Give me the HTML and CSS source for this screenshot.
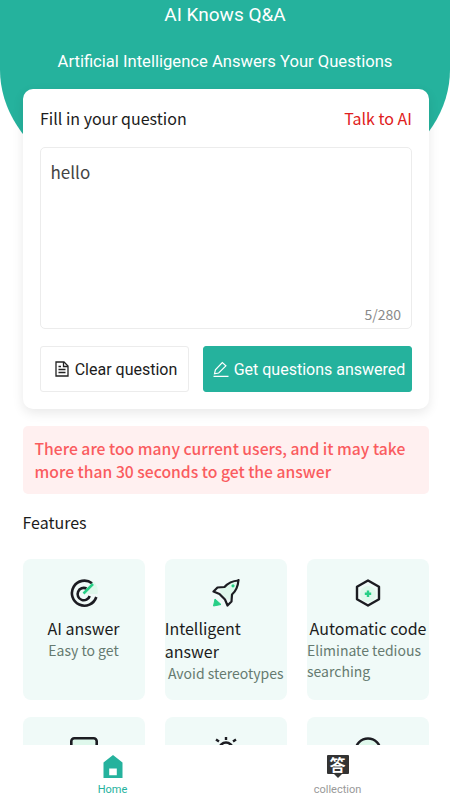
FILE: index.html
```html
<!DOCTYPE html>
<html lang="en">
<head>
<meta charset="utf-8">
<title>AI Knows Q&amp;A</title>
<link rel="stylesheet" href="styles.css">
</head>
<body>
<div class="app">
  <main class="main">
    <header class="hero">
      <h1 class="hero-title">AI Knows Q&amp;A</h1>
      <p class="hero-sub">Artificial Intelligence Answers Your Questions</p>
    </header>
    <section class="ask-card">
      <div class="ask-head">
        <span class="ask-label">Fill in your question</span>
        <span class="ask-talk">Talk to AI</span>
      </div>
      <div class="input-box">
        <div class="input-text">hello</div>
        <div class="input-count">5/280</div>
      </div>
      <div class="actions">
        <button class="btn btn-clear">
          <svg class="btn-icon" viewBox="0 0 16 16" fill="none" stroke="#222" stroke-width="1.300"><path d="M2 1h8l4 4v10H2z"/><path d="M9.500 1v4.500H14M4.500 5.500h2.500M4.500 8.500h7M4.500 11.500h7"/></svg>
          Clear question
        </button>
        <button class="btn btn-get">
          <svg class="btn-icon" viewBox="0 0 16 16" fill="none" stroke="#fff" stroke-width="1.200"><path d="M.5 15.300h15M1.500 12.800l.9-3.900 6.900-7.400 3.600 3.300-7.200 7.200z"/></svg>
          Get questions answered
        </button>
      </div>
    </section>
    <div class="notice">There are too many current users, and it may take more than 30 seconds to get the answer</div>
    <h2 class="features-title">Features</h2>
    <div class="feature-grid">
      <div class="feature">
        <svg class="feature-icon" viewBox="0 0 28 28" fill="none">
          <path d="M13 15 24 3a13 13 0 0 1 3.500 12z" fill="#dff8ec"/>
          <path d="M22 4.200A12.500 12.500 0 1 0 26.300 18" stroke="#1c1c22" stroke-width="2.600"/>
          <path d="M16.500 9.500a6.200 6.200 0 1 0 3.200 7.500" stroke="#1c1c22" stroke-width="2.600"/>
          <path d="M13.500 14.500 23 5" stroke="#27cf86" stroke-width="2.500"/>
        </svg>
        <div class="feature-name center">AI answer</div>
        <div class="feature-desc center">Easy to get</div>
      </div>
      <div class="feature">
        <svg class="feature-icon" viewBox="0 0 28 28" fill="none">
          <path d="M9 18 8 11 14 5 25 3 24 14 18 21z" fill="#dff8ec"/>
          <path d="M26.500 1.500c-6 .4-10.500 2.500-14 6.500L5.500 8.500 1.500 12.500l6 2.500 5.500 5.500 2.500 6 4-4 .5-7c4-3.500 6-8 6.500-14.500z" stroke="#1c1c22" stroke-width="2.200" stroke-linejoin="round"/>
          <circle cx="21" cy="6.800" r="1.600" fill="#27cf86"/>
          <path d="M3 20l6 5.500-7.500 1.500z" fill="#27cf86" stroke="#27cf86" stroke-linejoin="round"/>
        </svg>
        <div class="feature-name">Intelligent answer</div>
        <div class="feature-desc center">Avoid stereotypes</div>
      </div>
      <div class="feature">
        <svg class="feature-icon" viewBox="0 0 28 28" fill="none">
          <circle cx="14" cy="15" r="8" fill="#dff8ec"/>
          <path d="M14 1.500 25 7.800v12.400L14 26.500 3 20.200V7.800z" stroke="#1c1c22" stroke-width="2.400" stroke-linejoin="round"/>
          <path d="M14 11.500v6.500M10.800 14.800h6.400" stroke="#27cf86" stroke-width="2.400"/>
        </svg>
        <div class="feature-name center nowrap">Automatic code</div>
        <div class="feature-desc">Eliminate tedious searching</div>
      </div>
      <div class="feature">
        <svg class="feature-icon" viewBox="0 0 28 28" fill="none">
          <rect x="1.300" y="1.300" width="25.400" height="22" rx="3" fill="#dff8ec" stroke="#1c1c22" stroke-width="2.600"/>
        </svg>
      </div>
      <div class="feature">
        <svg class="feature-icon" viewBox="0 0 28 28" fill="none">
          <circle cx="14" cy="12" r="6.500" stroke="#1c1c22" stroke-width="2.600"/>
          <path d="M14 0v3M4 2.500l3 2M24 2.500l-3 2" stroke="#1c1c22" stroke-width="2.400"/>
        </svg>
      </div>
      <div class="feature">
        <svg class="feature-icon" viewBox="0 0 28 28" fill="none">
          <circle cx="14" cy="14" r="12.500" fill="#dff8ec" stroke="#1c1c22" stroke-width="2.400"/>
        </svg>
      </div>
    </div>
  </main>
  <nav class="tabbar">
    <div class="tab tab-active">
      <svg class="tab-icon" viewBox="0 0 20 23"><path fill-rule="evenodd" d="M10 0 19.500 7.500V23H.5V7.500zM6.200 13.500v6.800h7.600v-6.800z" fill="#25b29d"/></svg>
      <span>Home</span>
    </div>
    <div class="tab">
      <div class="answer-badge"><span class="answer-glyph">答</span></div>
      <span>collection</span>
    </div>
  </nav>
</div>
</body>
</html>
```

FILE: styles.css
```css
* { box-sizing: border-box; }
html, body { margin: 0; height: 100%; background: #fff; overflow: hidden; }
body { font-family: "Noto Sans CJK SC", "Noto Sans", sans-serif; color: #1c1c1c; }
.app { display: flex; flex-direction: column; height: 800px; }
.main { flex: 1; min-height: 0; overflow: hidden; }

.hero {
  height: 216px;
  background: #25b29d;
  color: #fff;
  text-align: center;
  font-family: Roboto, sans-serif;
  border-radius: 0 0 225px 225px / 0 0 146px 146px;
}
.hero-title { margin: 0; padding-top: 3px; font-size: 19px; line-height: 24px; font-weight: 400; }
.hero-sub { margin: 0; padding-top: 24px; font-size: 16.600px; line-height: 22px; }

.ask-card {
  margin: -127px 21px 0 22.500px;
  height: 320px;
  padding: 14px 17px 0;
  background: #fff;
  border-radius: 10px;
  box-shadow: 0 4px 12px rgba(0, 0, 0, .09);
  position: relative;
}
.ask-head { display: flex; justify-content: space-between; align-items: center; height: 30px; font-size: 16px; padding-left: .500px; }
.ask-talk { color: #e02020; }
.input-box {
  margin-top: 14px;
  height: 182px;
  display: flex;
  flex-direction: column;
  justify-content: space-between;
  padding: 11px 10px 4px 10px;
  border: 1px solid #ececec;
  border-radius: 5px;
}
.input-text { font-size: 17px; line-height: 26px; color: #444; }
.input-count { text-align: right; font-size: 14px; line-height: 20px; color: #8a8a8a; }
.actions { display: flex; justify-content: space-between; margin-top: 17px; }
.btn {
  height: 46px;
  display: flex;
  align-items: center;
  justify-content: center;
  gap: 5px;
  padding: 0 0 0 3px;
  font-family: Roboto, sans-serif;
  font-size: 16px;
  border-radius: 3px;
  white-space: nowrap;
}
.btn-clear { width: 149px; background: #fff; color: #1c1c1c; border: 1px solid #ececec; }
.btn-get { width: 209px; background: #25b29d; color: #fff; border: 1px solid #25b29d; }
.btn-icon { width: 16px; height: 16px; flex: none; }

.notice {
  margin: 17px 21px 0 22.500px;
  height: 68px;
  padding: 0 12px;
  display: flex;
  align-items: center;
  background: #fff0f0;
  border-radius: 5px;
  color: #fa5c5f;
  font-size: 15.700px;
  font-weight: 500;
  line-height: 23.500px;
}
.features-title { margin: 16px 0 0 22.500px; font-size: 16px; line-height: 24px; font-weight: 400; }
.feature-grid {
  margin: 25px 21px 0 22.500px;
  display: grid;
  grid-template-columns: repeat(3, 122px);
  justify-content: space-between;
  row-gap: 17px;
}
.feature {
  height: 141px;
  padding-top: 20px;
  background: #f0faf8;
  border-radius: 8px;
  display: flex;
  flex-direction: column;
}
.feature-icon { width: 28px; height: 28px; align-self: center; flex: none; margin-bottom: 10px; }
.feature-name { font-size: 16px; line-height: 23px; color: #1c1c1c; }
.feature-desc { font-size: 14px; line-height: 21px; color: #667a70; }
.center { text-align: center; }
.nowrap { white-space: nowrap; }

.tabbar { height: 55px; background: #fff; display: flex; flex: none; position: relative; }
.tab {
  flex: 1;
  display: flex;
  flex-direction: column;
  align-items: center;
  padding-top: 10px;
  font-family: Roboto, sans-serif;
  font-size: 11px;
  line-height: 14px;
  color: #999;
}
.tab-active { color: #25b29d; }
.tab-icon { width: 22px; height: 23px; margin-bottom: 5px; flex: none; }
.answer-badge {
  position: relative;
  width: 22px;
  height: 19px;
  margin-bottom: 9px;
  flex: none;
  display: flex;
  align-items: center;
  justify-content: center;
  background: #333;
  border-radius: 1px;
}
.answer-badge::after {
  content: "";
  position: absolute;
  left: 7px;
  bottom: -4px;
  border-left: 4px solid transparent;
  border-right: 4px solid transparent;
  border-top: 4px solid #333;
}
.answer-glyph { font-family: "Noto Sans CJK SC", sans-serif; font-size: 16px; line-height: 19px; font-weight: 700; color: #fff; }
```
